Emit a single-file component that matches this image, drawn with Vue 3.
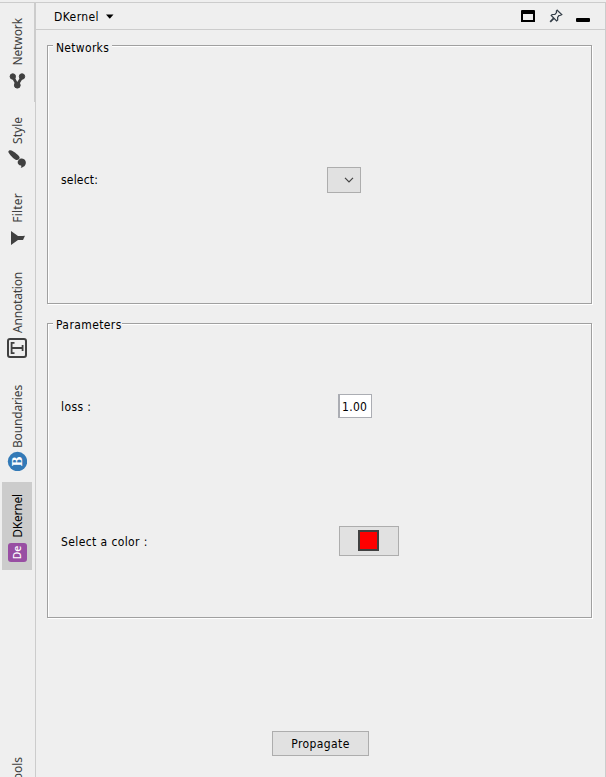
<script setup>
import { ref } from 'vue'

const active = ref('DKernel')
const tabs = [
  { name: 'Network', height: 97, icon: 'network', spacing: -0.1, gap: 5 },
  { name: 'Style', height: 78, icon: 'brush', spacing: 0, gap: 5 },
  { name: 'Filter', height: 79, icon: 'filter', spacing: 0.2, gap: 5 },
  { name: 'Annotation', height: 110, icon: 'text', spacing: -0.2, gap: 5 },
  { name: 'Boundaries', height: 113, icon: 'boundary', spacing: -0.15, gap: 3 },
  { name: 'DKernel', height: 88, icon: 'kernel', spacing: -0.2, gap: 4 }
]
const loss = ref('1.00')
</script>

<template>
  <div class="window">
    <nav class="rail">
      <button
        v-for="tab in tabs"
        :key="tab.name"
        class="tab"
        :class="{ active: active === tab.name }"
        :style="{ height: tab.height + 'px', gap: tab.gap + 'px', letterSpacing: tab.spacing + 'px' }"
        @click="active = tab.name"
      >
        <span class="tab-label">{{ tab.name }}</span>
        <svg class="tab-icon" width="20" height="20" viewBox="0 0 20 20">
          <g v-if="tab.icon === 'network'" fill="#404040" stroke="#404040">
            <path d="M6 6 10.200 14 15 6" fill="none" stroke-width="2.800" />
            <circle cx="5.800" cy="5.500" r="2.700" />
            <circle cx="15" cy="5.500" r="2.700" />
            <circle cx="10.300" cy="14.200" r="2.900" />
          </g>
          <g v-else-if="tab.icon === 'brush'" fill="#404040">
            <path d="M1.300 3C1.500 .9 3.800 .9 6 2.200 8.600 3.800 12 6.400 12.600 8.300c.4 1.500-1.600 3.300-3.400 2.700C6.800 10.200 3 6 1.300 3Z" />
            <path d="M11.800 11c1.800-2.300 5.800-1.700 6.800 1.200.9 2.800-.6 5.800-4.900 6.600.7-.8.8-1.500.4-2.200-2.300-.3-3.700-1.700-3.400-3.800.1-.7.500-1.300 1.100-1.800Z" />
          </g>
          <path v-else-if="tab.icon === 'filter'" fill="#404040" d="M4 3 11 8H15.500L18 7.700 16 12H11L4 17Z" />
          <g v-else-if="tab.icon === 'text'" fill="none" stroke="#404040" stroke-width="2">
            <rect x="1" y="1" width="18" height="18" rx="2" />
            <path d="M4.500 10H15.500" />
            <path d="M7.500 4.800H4.600V15.200H7.500M15.600 7V13" stroke-width="1.800" />
          </g>
          <g v-else-if="tab.icon === 'boundary'">
            <circle cx="10.500" cy="10.500" r="9.700" fill="#337ab7" />
            <text class="glyph-b" transform="translate(14.500 10.500) rotate(-90)" text-anchor="middle">B</text>
          </g>
          <g v-else>
            <rect x="1" y="1" width="19" height="19" rx="3" fill="#984ea3" />
            <text class="glyph-de" transform="translate(14 10.500) rotate(-90)" text-anchor="middle">De</text>
          </g>
        </svg>
      </button>
      <div class="tools"><span class="tab-label">Tools</span></div>
    </nav>

    <main class="panel">
      <header class="titlebar">
        <span class="title">DKernel</span>
        <svg class="caret" width="8" height="5" viewBox="0 0 8 5"><path d="M0 .5H7.500L4 4.500H3.500Z" /></svg>
        <div class="actions">
          <svg width="14" height="12" viewBox="0 0 14 12"><path fill="none" stroke="#000" stroke-width="2" d="M1 2V11H13V2" /><path d="M0 1Q0 0 1 0H13Q14 0 14 1V4H0Z" /></svg>
          <svg class="pin" width="14" height="14" viewBox="0 0 14 14" fill="none" stroke="#333d47" stroke-width="1.200"><path d="M8.200 1.200 12.800 5.600 11.600 6.300 9.900 6.600 8.600 8.500 8.700 11 7.600 12 2.200 6.500 3.100 5.500 5.900 5.300 7.500 3.600 7.400 2Z" /><path d="M4.900 9.200 1.200 12.800" stroke-width="1.800" /></svg>
          <svg class="minimize" width="14" height="4" viewBox="0 0 14 4"><rect width="14" height="4" rx="1" /></svg>
        </div>
      </header>

      <section class="group networks">
        <h2 class="legend">Networks</h2>
        <div class="row">
          <label class="label l-select">select:</label>
          <button class="combo">
            <svg width="10" height="6" viewBox="0 0 10 6"><path d="M1 .8 5 4.800 9 .8" fill="none" stroke="#444" stroke-width="1.200" /></svg>
          </button>
        </div>
      </section>

      <section class="group parameters">
        <h2 class="legend l-params">Parameters</h2>
        <div class="row loss-row">
          <label class="label l-loss">loss :</label>
          <input v-model="loss" class="field" />
        </div>
        <div class="row color-row">
          <label class="label l-color">Select a color :</label>
          <button class="color"><span class="swatch"></span></button>
        </div>
      </section>

      <button class="propagate">Propagate</button>
    </main>
  </div>
</template>

<style>
body { overflow: hidden; background: #efefef; }
</style>

<style scoped>
* { box-sizing: border-box; }
.window {
  display: flex;
  width: 606px;
  height: 777px;
  padding-top: 2px;
  overflow: hidden;
  background: #efefef;
  color: #000;
  font: 12px/16px "DejaVu Sans Condensed", "DejaVu Sans", sans-serif;
}
button { padding: 0; border: 0; font: inherit; color: inherit; border-radius: 0; }
.rail {
  display: flex;
  flex-direction: column;
  width: 35px;
  height: 775px;
  padding-left: 2px;
  border-top: 1px solid #ccc;
  background: linear-gradient(#ccc, #ccc) right top / 1px 99px no-repeat;
  overflow: hidden;
}
.tab {
  display: flex;
  flex: none;
  flex-direction: column;
  align-items: center;
  justify-content: flex-end;
  width: 30px;
  padding-bottom: 8px;
  background: transparent;
  color: #404040;
}
.tab:first-child { margin-top: -1px; }
.tab.active { margin-top: 3px; background: #ccc; color: #000; }
.tab-label {
  margin-left: 2px;
  writing-mode: vertical-rl;
  transform: rotate(180deg);
  font: 12px/16px "Noto Sans", sans-serif;
  white-space: nowrap;
}
.tab-icon { display: block; }
.glyph-b { font: bold 12px "DejaVu Serif", serif; fill: #fff; }
.glyph-de { font: 500 10.500px "Noto Sans", sans-serif; letter-spacing: 0; fill: #fff; }
.tools { display: flex; justify-content: center; width: 30px; margin-top: 187px; color: #404040; }
.panel {
  display: flex;
  flex-direction: column;
  width: 571px;
  height: 775px;
  border: 1px solid #ccc;
  border-bottom: 0;
}
.titlebar {
  display: flex;
  align-items: center;
  height: 27px;
  flex: none;
  padding: 0 15px 0 18px;
  border-bottom: 1px solid #ccc;
}
.title { padding-top: 1px; letter-spacing: 0.4px; }
.caret { margin-left: 7px; }
.actions { display: flex; align-items: center; gap: 14px; margin-left: auto; }
.actions svg { display: block; }
.minimize { margin: 7px 0 0 -1px; }
.group {
  position: relative;
  flex: none;
  width: 545px;
  margin-left: 11px;
  border: 1px solid #a0a0a0;
  box-shadow: 1px 1px 0 #fff, inset 1px 1px 0 #fff;
}
.networks { height: 259px; margin-top: 15px; padding-top: 121px; }
.parameters { height: 295px; margin-top: 19px; padding-top: 70px; }
.legend {
  position: absolute;
  top: -6px;
  left: 5px;
  margin: 0;
  padding: 0 3px;
  background: #efefef;
  font: inherit;
  letter-spacing: 0.3px;
}
.legend.l-params { top: -7px; padding-right: 0; letter-spacing: 0.4px; }
.row { display: flex; align-items: center; padding-left: 13px; }
.label { white-space: pre; letter-spacing: 0.4px; }
.l-select { width: 266px; letter-spacing: 0.2px; }
.l-loss { width: 277px; padding-top: 2px; }
.l-color { width: 278px; padding-top: 2px; }
.combo {
  display: flex;
  align-items: center;
  justify-content: flex-end;
  width: 34px;
  height: 26px;
  padding-right: 6px;
  border: 1px solid #adadad;
  background: #e1e1e1;
}
.field {
  width: 34px;
  height: 24px;
  padding: 2px 0 0 2px;
  border: 1px solid #abadb3;
  border-left-width: 2px;
  border-radius: 0;
  outline: 0;
  background: #fff;
  color: #000;
  font: inherit;
  letter-spacing: 0.3px;
}
.color-row { margin-top: 108px; }
.color {
  display: flex;
  align-items: center;
  justify-content: center;
  width: 60px;
  height: 30px;
  padding: 0 2px 1px 0;
  border: 1px solid #adadad;
  background: #e1e1e1;
}
.swatch { width: 21px; height: 21px; border: 2px solid #404040; background: #f00; }
.propagate {
  width: 97px;
  height: 25px;
  flex: none;
  margin: 113px 0 0 236px;
  padding-top: 1px;
  border: 1px solid #adadad;
  background: #e1e1e1;
  letter-spacing: 0.4px;
}
</style>
